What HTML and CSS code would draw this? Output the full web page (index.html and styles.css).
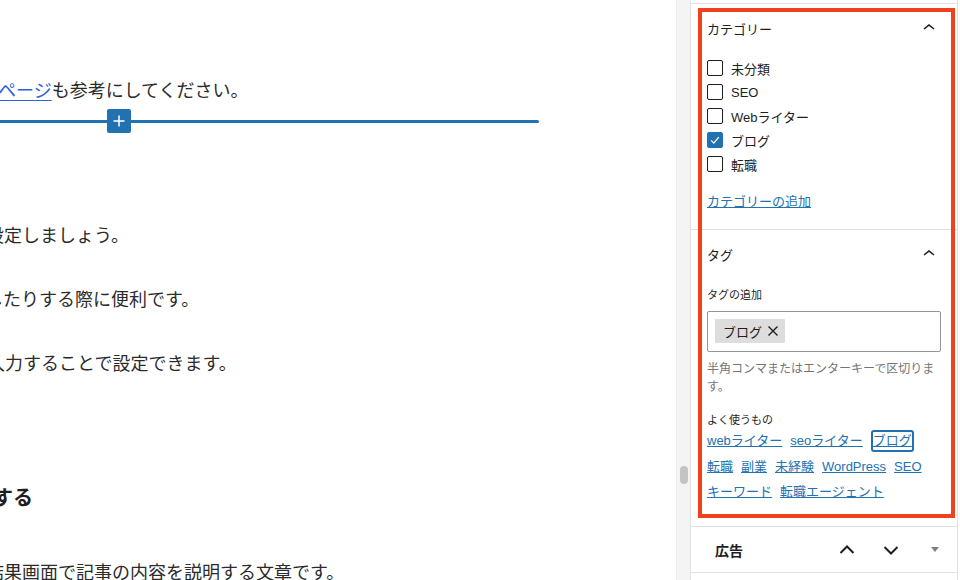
FILE: index.html
```html
<!DOCTYPE html>
<html lang="ja">
<head>
<meta charset="utf-8">
<title>Editor</title>
<link rel="stylesheet" href="styles.css">
</head>
<body>
<div class="page">
  <main class="editor">
    <p class="para cut-2"><a class="link" href="#">ページ</a>も参考にしてください。</p>
    <div class="inserter">
      <span class="seg-left"></span>
      <span class="ins-btn"><svg width="14" height="14" viewBox="0 0 14 14"><path d="M7 1.5v11M1.5 7h11" stroke="#fff" stroke-width="1.5" fill="none"/></svg></span>
      <span class="seg-right"></span>
    </div>
    <p class="para p2 cut-14">設定しましょう。</p>
    <p class="para p3 cut-15">したりする際に便利です。</p>
    <p class="para p3 cut-13">入力することで設定できます。</p>
    <h2 class="heading cut-7">する</h2>
    <p class="para p6 cut-14">結果画面で記事の内容を説明する文章です。</p>
  </main>
  <div class="gutter"><div class="thumb"></div></div>
  <aside class="sidebar">
    <section class="panel panel-first">
      <div class="panel-head">
        <span class="panel-title">カテゴリー</span>
        <svg class="chev" viewBox="0 0 24 24"><path d="M6.5 12.4L12 8l5.5 4.4-.9 1.2L12 10l-4.5 3.6-1-1.2z" fill="#1e1e1e"/></svg>
      </div>
      <div class="cat-body">
        <div class="cat-row"><span class="cb"></span><span>未分類</span></div>
        <div class="cat-row"><span class="cb"></span><span>SEO</span></div>
        <div class="cat-row"><span class="cb"></span><span>Webライター</span></div>
        <div class="cat-row"><span class="cb on"><svg width="14" height="14" viewBox="0 0 14 14"><path d="M3.2 7.4l2.6 2.7 5-6" stroke="#fff" stroke-width="1.3" fill="none"/></svg></span><span>ブログ</span></div>
        <div class="cat-row"><span class="cb"></span><span>転職</span></div>
        <a class="add-link" href="#">カテゴリーの追加</a>
      </div>
    </section>
    <section class="panel">
      <div class="panel-head">
        <span class="panel-title">タグ</span>
        <svg class="chev" viewBox="0 0 24 24"><path d="M6.5 12.4L12 8l5.5 4.4-.9 1.2L12 10l-4.5 3.6-1-1.2z" fill="#1e1e1e"/></svg>
      </div>
      <div class="tag-body">
        <div class="tag-label">タグの追加</div>
        <div class="token-field">
          <span class="token">ブログ<svg class="token-x" width="12" height="12" viewBox="0 0 12 12"><path d="M1.5 1.5l9 9M10.5 1.5l-9 9" stroke="#1e1e1e" stroke-width="1.4" fill="none"/></svg></span>
        </div>
        <p class="help">半角コンマまたはエンターキーで区切ります。</p>
        <div class="freq-label">よく使うもの</div>
        <div class="cloud">
          <a href="#">webライター</a>
          <a href="#">seoライター</a>
          <a href="#" class="focus">ブログ</a>
          <a href="#">転職</a>
          <a href="#">副業</a>
          <a href="#">未経験</a>
          <a href="#">WordPress</a>
          <a href="#">SEO</a>
          <a href="#">キーワード</a>
          <a href="#">転職エージェント</a>
        </div>
      </div>
    </section>
    <section class="panel ad-panel">
      <span class="ad-title">広告</span>
      <span class="hbtn"><svg width="16" height="16" viewBox="0 0 16 16"><path d="M1.5 11L8 4.5 14.5 11" stroke="#1e1e1e" stroke-width="2" fill="none"/></svg></span>
      <span class="hbtn"><svg width="16" height="16" viewBox="0 0 16 16"><path d="M1.5 5L8 11.5 14.5 5" stroke="#1e1e1e" stroke-width="2" fill="none"/></svg></span>
      <span class="hbtn"><svg width="8" height="5" viewBox="0 0 8 5"><path d="M0 0h8L4 5z" fill="#7e8086"/></svg></span>
    </section>
    <div class="annot"></div>
  </aside>
</div>
</body>
</html>
```
FILE: styles.css
```css
body {
  margin: 0;
  width: 960px;
  height: 580px;
  overflow: hidden;
  background: #fff;
  font-family: "Liberation Sans", "Noto Sans CJK JP", sans-serif;
}

.page {
  display: flex;
  height: 580px;
}

/* editor canvas */
.editor {
  width: 676px;
  flex: none;
  box-sizing: border-box;
  overflow: hidden;
  padding-top: 73px;
  color: #2b2b2b;
  font-family: "Noto Sans CJK JP", sans-serif;
  font-size: 18px;
}

.para {
  margin: 0;
  line-height: 32px;
  white-space: nowrap;
}

.link {
  color: #2f62d4;
  text-decoration: underline;
  text-underline-offset: 3px;
}

.p2 { margin-top: 85px; }
.p3 { margin-top: 32px; }
.p6 { margin-top: 42px; }

.heading {
  margin: 103px 0 0;
  font-size: 20px;
  font-weight: 700;
  line-height: 32px;
  white-space: nowrap;
  color: #1e1e1e;
}

.cut-2 { text-indent: -2px; }
.cut-7 { text-indent: -7px; }
.cut-13 { text-indent: -13px; }
.cut-14 { text-indent: -14px; }
.cut-15 { text-indent: -15px; }

.inserter {
  display: flex;
  align-items: center;
  width: 539px;
  height: 24px;
  margin-top: 4px;
}

.seg-left {
  width: 107px;
  height: 3px;
  background: #2271b1;
}

.seg-right {
  flex: 1;
  height: 3px;
  background: #2271b1;
  border-radius: 0 2px 2px 0;
}

.ins-btn {
  width: 24px;
  height: 24px;
  border-radius: 2px;
  background: #2271b1;
  display: flex;
  align-items: center;
  justify-content: center;
}

/* scrollbar gutter */
.gutter {
  width: 14px;
  flex: none;
  box-sizing: border-box;
  background: #f4f4f4;
  border-left: 1px solid #ebebeb;
  padding: 466px 0 0 3px;
}

.thumb {
  width: 8px;
  height: 18px;
  border-radius: 4px;
  background: #c4c4c4;
}

/* sidebar */
.sidebar {
  position: relative;
  width: 268px;
  flex: none;
  box-sizing: border-box;
  border-left: 1px solid #e0e0e0;
  border-right: 1px solid #e0e0e0;
  padding-top: 3px;
  color: #1e1e1e;
  font-size: 13px;
}

.panel {
  border-bottom: 1px solid #e0e0e0;
}

.panel-first {
  border-top: 1px solid #e0e0e0;
}

.panel-head {
  height: 48px;
  padding: 0 16px;
  display: flex;
  align-items: center;
  justify-content: space-between;
}

.panel-title {
  font-size: 13px;
}

.chev {
  width: 24px;
  height: 24px;
}

.cat-body {
  padding: 4px 16px 18px;
}

.cat-row {
  display: flex;
  align-items: center;
  gap: 8px;
  height: 24px;
}

.cb {
  width: 16px;
  height: 16px;
  box-sizing: border-box;
  border: 1px solid #1e1e1e;
  border-radius: 2px;
  background: #fff;
  display: flex;
  align-items: center;
  justify-content: center;
}

.cb.on {
  background: #2271b1;
  border-color: #2271b1;
}

.add-link {
  display: block;
  margin-top: 17px;
  line-height: 18px;
  color: #2271b1;
  text-decoration: underline;
}

.tag-body {
  padding: 0 16px 21.5px;
}

.tag-label {
  margin-top: 9px;
  font-size: 11px;
  line-height: 16px;
}

.token-field {
  margin-top: 8px;
  border: 1px solid #949494;
  border-radius: 2px;
  padding: 7px 7px 8px;
  display: flex;
}

.token {
  display: flex;
  align-items: center;
  height: 24px;
  padding: 0 6px 0 8px;
  background: #ddd;
  border-radius: 1px;
  font-size: 13px;
}

.token-x {
  margin-left: 5px;
}

.help {
  margin: 8px 0 0;
  font-size: 12px;
  line-height: 18px;
  color: #757575;
}

.freq-label {
  margin-top: 16px;
  font-size: 11px;
  line-height: 16px;
}

.cloud {
  display: flex;
  flex-wrap: wrap;
  align-items: center;
  column-gap: 8px;
}

.cloud a {
  line-height: 25.5px;
  font-size: 13px;
  color: #2271b1;
  text-decoration: underline;
}

.cloud a.focus {
  line-height: 18px;
  border: 2px solid #2271b1;
  border-radius: 3px;
}

.ad-panel {
  height: 45px;
  display: flex;
  align-items: center;
  padding-left: 24px;
}

.ad-title {
  flex: 1;
  font-size: 14px;
  font-weight: 700;
}

.hbtn {
  width: 44px;
  height: 44px;
  display: flex;
  align-items: center;
  justify-content: center;
}

.annot {
  position: absolute;
  left: 7px;
  top: 8px;
  width: 257px;
  height: 510px;
  box-sizing: border-box;
  border: 4px solid #f0401e;
  pointer-events: none;
}
```
